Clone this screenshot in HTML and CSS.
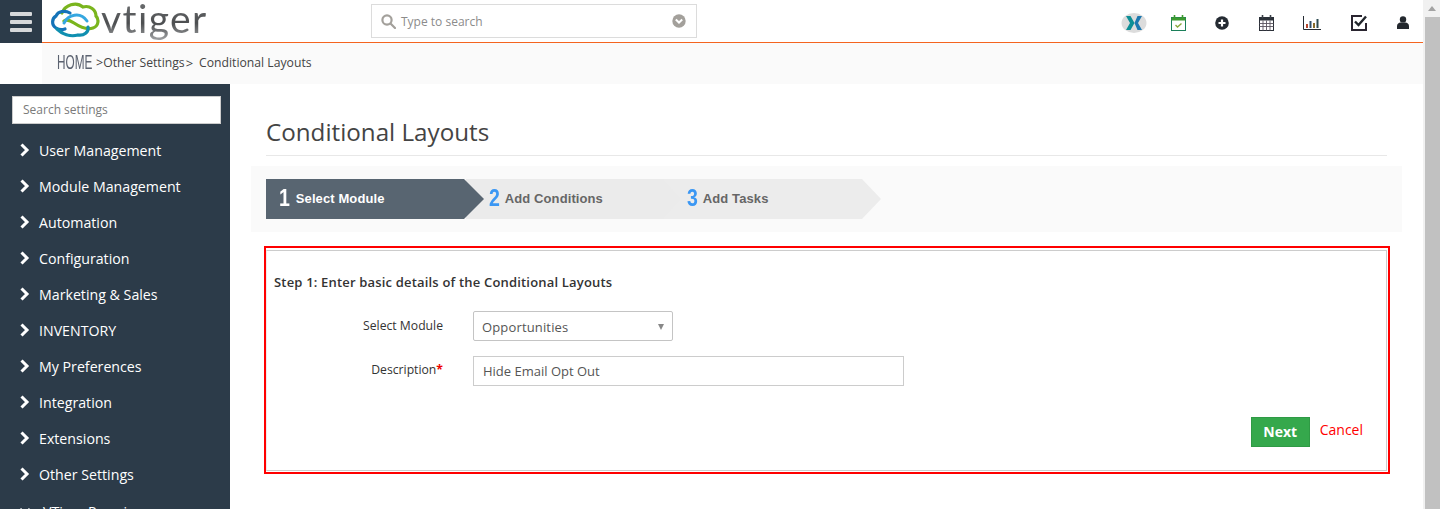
FILE: index.html
```html
<!DOCTYPE html>
<html lang="en">
<head>
<meta charset="utf-8">
<title>Conditional Layouts</title>
<link rel="stylesheet" href="styles.css">
</head>
<body>
<div class="page">
  <div class="main">
    <header class="topbar">
      <div class="menu-btn"><span></span><span></span><span></span></div>
      <div class="logo">
        <svg class="logo-mark" width="50" height="38" viewBox="50 2 50 38" fill="none" stroke-linecap="round">
          <path d="M62 14C65 6 76 2 83 8C90 6 96 11 96 17C99 20 99 27 93 29C87 31 80 28 74 24C71 22 67 20 64 22" stroke="#7ab51d" stroke-width="3.2"/>
          <path d="M70 14C65 11 58 12 56 17C52 19 51 26 56 29C59 31 62 31 65 30" stroke="#1573b8" stroke-width="3.2"/>
          <path d="M57 30C62 35 70 38 78 36C84 37 89 33 88 28" stroke="#0f8fb0" stroke-width="3.2"/>
          <path d="M64 24C68 16 80 12 87 22" stroke="#35a7e0" stroke-width="3"/>
        </svg>
        <span class="logo-word">vtiger</span>
      </div>
      <div class="global-search">
        <svg width="15" height="15" viewBox="0 0 15 15" fill="none" stroke="#a3a09b" stroke-width="2.2"><circle cx="6" cy="6" r="4.6"/><path d="M9.5 9.5 14 14" stroke-linecap="round"/></svg>
        <span class="search-text">Type to search</span>
        <svg class="search-caret" width="14" height="14" viewBox="0 0 14 14"><circle cx="7" cy="7" r="6.7" fill="#a3a09b"/><path d="M3.8 5.6 7 8.6l3.2-3" fill="none" stroke="#fff" stroke-width="2"/></svg>
      </div>
      <nav class="top-icons">
        <svg class="ic-x" width="26" height="20" viewBox="0 0 26 20"><ellipse cx="13" cy="10" rx="12.500" ry="10" fill="#dcdcdc"/><path d="M5 3h4.500l4 7-4 7H5l4-7z" fill="#0d8f96"/><path d="M21 3h-4.500l-3 7 3 7H21l-4-7z" fill="#1c78b0"/></svg>
        <svg class="ic-cal" width="15" height="16" viewBox="0 0 15 16"><rect x=".5" y="2.500" width="14" height="13" fill="#fff" stroke="#1b7f5a"/><rect x=".5" y="2.500" width="14" height="3" fill="#3d9a2f"/><path d="M3.500 0v3M11.500 0v3" stroke="#3d9a2f" stroke-width="1.600"/><path d="M4.500 10l2 2 4-3.500" fill="none" stroke="#8aa83c" stroke-width="1.400"/></svg>
        <svg class="ic-plus" width="14" height="14" viewBox="0 0 14 14"><circle cx="7" cy="7" r="6.800" fill="#252b33"/><path d="M7 3.500v7M3.500 7h7" stroke="#fff" stroke-width="2.200"/></svg>
        <svg class="ic-grid" width="15" height="16" viewBox="0 0 15 16"><rect x=".5" y="2.500" width="14" height="13" fill="#fff" stroke="#2b3038"/><rect x=".5" y="2.500" width="14" height="3" fill="#2b3038"/><path d="M3.500 0v3.500M11.500 0v3.500" stroke="#3a4048" stroke-width="1.600"/><path d="M.5 8.500h14M.5 11.500h14M4 5.500v10M7.500 5.500v10M11 5.500v10" stroke="#5b5560" stroke-width=".9"/></svg>
        <svg class="ic-bars" width="18" height="14" viewBox="0 0 18 14"><path d="M.5 0v13.500H18" fill="none" stroke="#252b33"/><path d="M4 8v4" stroke="#b5472f" stroke-width="2"/><path d="M7.500 5v7" stroke="#33506b" stroke-width="2"/><path d="M11 7v5" stroke="#8a6b2a" stroke-width="2"/><path d="M14.500 3v9" stroke="#2d4a50" stroke-width="2"/></svg>
        <svg class="ic-check" width="16" height="16" viewBox="0 0 16 16"><path d="M11 1H1v14h14V8" fill="none" stroke="#2a2530" stroke-width="2"/><path d="M4 6.500l3.500 3.500L15 1.500" fill="none" stroke="#22262c" stroke-width="2.400"/></svg>
        <svg class="ic-user" width="12" height="13" viewBox="0 0 12 13"><circle cx="6" cy="3.400" r="3.200" fill="#23282e"/><path d="M0 13v-3c0-2 2-3.500 3.500-3.500h5C10 6.500 12 8 12 10v3z" fill="#23282e"/></svg>
      </nav>
    </header>
    <div class="crumb-row">
      <div class="crumbs">
        <span class="crumb-home">HOME</span>
        <span class="crumb-sep-first">&gt;</span><span>Other Settings</span>
        <span class="crumb-sep">&gt;</span>
        <span class="crumb-last">Conditional Layouts</span>
      </div>
    </div>
    <div class="body-row">
      <aside class="sidebar">
        <input class="side-search" type="text" placeholder="Search settings">
        <ul class="side-menu">
          <li><svg class="chev" width="10" height="14" viewBox="0 0 10 14"><path d="M1.500 1.500l5.500 5.500-5.500 5.500" fill="none" stroke="#fff" stroke-width="3"/></svg>User Management</li>
          <li><svg class="chev" width="10" height="14" viewBox="0 0 10 14"><path d="M1.500 1.500l5.500 5.500-5.500 5.500" fill="none" stroke="#fff" stroke-width="3"/></svg>Module Management</li>
          <li><svg class="chev" width="10" height="14" viewBox="0 0 10 14"><path d="M1.500 1.500l5.500 5.500-5.500 5.500" fill="none" stroke="#fff" stroke-width="3"/></svg>Automation</li>
          <li><svg class="chev" width="10" height="14" viewBox="0 0 10 14"><path d="M1.500 1.500l5.500 5.500-5.500 5.500" fill="none" stroke="#fff" stroke-width="3"/></svg>Configuration</li>
          <li><svg class="chev" width="10" height="14" viewBox="0 0 10 14"><path d="M1.500 1.500l5.500 5.500-5.500 5.500" fill="none" stroke="#fff" stroke-width="3"/></svg>Marketing &amp; Sales</li>
          <li><svg class="chev" width="10" height="14" viewBox="0 0 10 14"><path d="M1.500 1.500l5.500 5.500-5.500 5.500" fill="none" stroke="#fff" stroke-width="3"/></svg>INVENTORY</li>
          <li><svg class="chev" width="10" height="14" viewBox="0 0 10 14"><path d="M1.500 1.500l5.500 5.500-5.500 5.500" fill="none" stroke="#fff" stroke-width="3"/></svg>My Preferences</li>
          <li><svg class="chev" width="10" height="14" viewBox="0 0 10 14"><path d="M1.500 1.500l5.500 5.500-5.500 5.500" fill="none" stroke="#fff" stroke-width="3"/></svg>Integration</li>
          <li><svg class="chev" width="10" height="14" viewBox="0 0 10 14"><path d="M1.500 1.500l5.500 5.500-5.500 5.500" fill="none" stroke="#fff" stroke-width="3"/></svg>Extensions</li>
          <li><svg class="chev" width="10" height="14" viewBox="0 0 10 14"><path d="M1.500 1.500l5.500 5.500-5.500 5.500" fill="none" stroke="#fff" stroke-width="3"/></svg>Other Settings</li>
          <li class="premium"><svg class="chev" width="10" height="14" viewBox="0 0 10 14"><path d="M0 5l5 5 5-5" fill="none" stroke="#fff" stroke-width="3"/></svg>VTiger Premium</li>
        </ul>
      </aside>
      <main class="content">
        <h1 class="title">Conditional Layouts</h1>
        <div class="steps-wrap">
          <div class="steps">
            <div class="step step-active"><b>1</b><span>Select Module</span></div>
            <div class="step step-two"><b>2</b><span>Add Conditions</span></div>
            <div class="step step-three"><b>3</b><span>Add Tasks</span></div>
          </div>
        </div>
        <section class="red-box">
          <div class="inner-box">
            <h2 class="step-head">Step 1: Enter basic details of the Conditional Layouts</h2>
            <div class="form-row row-module">
              <label class="form-label">Select Module</label>
              <div class="select-box"><span>Opportunities</span><i class="select-arrow"></i></div>
            </div>
            <div class="form-row row-desc">
              <label class="form-label">Description<em>*</em></label>
              <input class="text-input" type="text" value="Hide Email Opt Out">
            </div>
            <div class="actions">
              <button class="btn-next" type="button">Next</button>
              <a class="cancel">Cancel</a>
            </div>
          </div>
        </section>
      </main>
    </div>
  </div>
  <div class="scrollbar">
    <div class="scroll-up"></div>
    <div class="scroll-thumb"></div>
  </div>
</div>
</body>
</html>
```
FILE: styles.css
```css
* { box-sizing: border-box; }
html, body { margin: 0; padding: 0; height: 509px; overflow: hidden; background: #fff; }
body { font-family: "Open Sans", sans-serif; font-size: 13px; color: #333; }
.page { display: flex; width: 1440px; height: 509px; overflow: hidden; }
.main { width: 1423px; flex: none; display: flex; flex-direction: column; }

.topbar { height: 43px; flex: none; display: flex; align-items: center; border-bottom: 1px solid #f4641f; background: #fff; }
.menu-btn { width: 42px; height: 43px; margin-bottom: -1px; background: #2c3b49; display: flex; flex-direction: column; justify-content: center; align-items: center; gap: 4px; flex: none; }
.menu-btn span { display: block; width: 22px; height: 4px; background: #d6d8da; border-radius: 1px; }
.logo { width: 329px; flex: none; display: flex; align-items: center; padding-left: 8px; height: 42px; }
.logo-mark { flex: none; margin-top: -2px; }
.logo-word { font-family: "Lato", sans-serif; font-size: 39px; line-height: 36px; height: 42px; padding-bottom: 6px; font-weight: 400; margin-left: 1px; letter-spacing: 1.4px; background: linear-gradient(#6f7173, #4c4e50 55%, #a9abad); -webkit-background-clip: text; background-clip: text; color: transparent; }
.global-search { width: 326px; height: 34px; border: 1px solid #dcdcdc; flex: none; display: flex; align-items: center; padding: 0 10px 0 9px; background: #fff; }
.search-text { margin-left: 5px; color: #8b8b8b; font-size: 12px; flex: 1; }
.top-icons { flex: 1; display: flex; align-items: center; padding-left: 424px; padding-top: 3px; height: 42px; }
.top-icons svg { flex: none; display: block; }
.ic-x { margin-right: 24px; }
.ic-cal { margin-right: 29px; }
.ic-plus { margin-right: 30px; }
.ic-grid { margin-right: 29px; }
.ic-bars { margin-right: 30px; }
.ic-check { margin-right: 30px; }

.crumb-row { height: 41px; flex: none; padding-left: 42px; background: #fff; }
.crumbs { height: 41px; background: #fafafa; display: flex; align-items: center; padding: 0 0 2px 15px; font-size: 12.2px; color: #444; white-space: pre; }
.crumb-home { font-family: "Liberation Sans", sans-serif; font-size: 20px; color: #5b6270; width: 35px; margin-right: 4px; transform: scaleX(.59); transform-origin: left center; }
.crumb-sep-first { font-size: 12.5px; }
.crumb-sep { margin: 0 6px 0 1px; font-size: 13px; }

.body-row { flex: 1; display: flex; min-height: 0; }
.sidebar { width: 230px; flex: none; background: #2c3b49; padding: 12px 9px 0 12px; overflow: hidden; }
.side-search { display: block; width: 209px; height: 28px; border: 1px solid #ccc; background: #fff; padding: 0 10px 2px; font: 12px "Open Sans", sans-serif; color: #777; outline: none; }
.side-search::placeholder { color: #7a7a7a; opacity: 1; }
.side-menu { list-style: none; margin: 8px 0 0 -12px; padding: 0; }
.side-menu li { height: 36px; display: flex; align-items: center; padding-left: 20px; color: #fff; font-size: 14.2px; white-space: nowrap; }
.chev { flex: none; margin-right: 9px; }
.side-menu .premium { padding-top: 2px; }
.premium .chev { margin-right: 13px; }

.content { flex: 1; min-width: 0; padding: 33px 21px 0 21px; }
.title { margin: 0 15px 0 15px; height: 39px; font-size: 24.2px; line-height: 30px; font-weight: 400; color: #444; border-bottom: 1px solid #e8e8e8; }
.steps-wrap { margin: 10px 0 0 0; height: 66px; background: #fafafa; padding: 13px 0 0 15px; }
.steps { display: flex; height: 40px; }
.step { height: 40px; display: flex; align-items: center; padding-bottom: 2px; font-family: "Liberation Sans", Arial, sans-serif; font-weight: 700; font-size: 13px; letter-spacing: .1px; color: #666; flex: none; }
.step b { font-size: 23px; color: #3b97f3; margin-right: 3px; font-weight: 700; letter-spacing: 0; transform: scaleX(.85); transform-origin: left center; }
.step-active { width: 218px; padding-left: 13px; background: #586571; color: #fff; clip-path: polygon(0 0, 198px 0, 218px 50%, 198px 100%, 0 100%); position: relative; z-index: 2; }
.step-active b { color: #fff; margin-right: 4px; }
.step-two { width: 215px; margin-left: -18px; padding-left: 23px; background: #ebebeb; clip-path: polygon(0 0, 197px 0, 215px 50%, 197px 100%, 0 100%); position: relative; z-index: 1; }
.step-three { width: 218px; margin-left: -18px; padding-left: 24px; background: #ececec; clip-path: polygon(0 0, 199px 0, 218px 50%, 199px 100%, 0 100%); }

.red-box { margin: 14px 12px 0 13px; height: 228px; border: 2px solid #f00; padding: 2px 1px 1px 0; background: #fff; }
.inner-box { height: 100%; border: 1px solid #ccc; border-left-color: #ececec; padding: 22px 23px 0 7px; display: flex; flex-direction: column; }
.step-head { margin: 0; font-size: 13px; line-height: 18px; font-weight: 600; color: #333; letter-spacing: .18px; }
.form-row { display: flex; align-items: center; }
.row-module { margin-top: 20px; height: 30px; }
.row-desc { margin-top: 15px; height: 30px; }
.form-label { width: 169px; text-align: right; font-size: 12.2px; color: #333; margin-right: 30px; flex: none; }
.row-module .form-label { padding-bottom: 2px; }
.row-desc .form-label { padding-bottom: 4px; }
.form-label em { font-style: normal; font-weight: 700; color: #e00; }
.select-box { width: 200px; height: 30px; border: 1px solid #c4c4c4; border-radius: 2px; padding: 2px 8px 0; display: flex; align-items: center; justify-content: space-between; color: #555; font-size: 13px; letter-spacing: .15px; }
.select-arrow { width: 0; height: 0; border-left: 3.5px solid transparent; border-right: 3.5px solid transparent; border-top: 6px solid #888; }
.text-input { width: 431px; height: 30px; border: 1px solid #ccc; padding: 0 9px; font: 13px "Open Sans", sans-serif; color: #555; outline: none; }
.actions { margin-top: 31px; display: flex; justify-content: flex-end; align-items: flex-start; }
.btn-next { width: 59px; height: 30px; background: #35a84c; border: 1px solid #2f9a45; color: #fff; font: 700 14px "Open Sans", sans-serif; padding: 0 0 2px; }
.cancel { color: #f00; font-size: 14px; margin-left: 10px; margin-top: 1px; line-height: 24px; }

.scrollbar { width: 17px; flex: none; background: #f1f1f1; display: flex; flex-direction: column; padding: 0 0 0 2px; }
.scroll-up { height: 17px; position: relative; flex: none; }
.scroll-up::after { content: ""; position: absolute; left: 3px; top: 6px; border-left: 4px solid transparent; border-right: 4px solid transparent; border-bottom: 5px solid #a3a3a3; }
.scroll-thumb { flex: 1; background: #c1c1c1; }
```
